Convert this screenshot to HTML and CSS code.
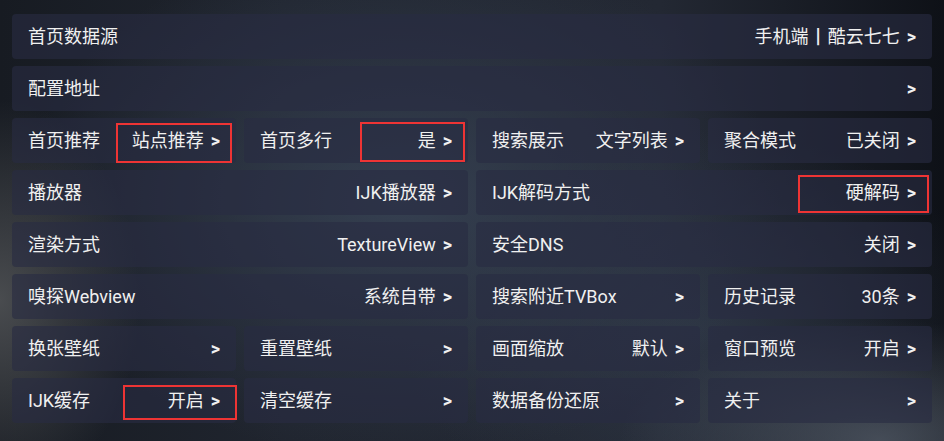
FILE: index.html
```html
<!DOCTYPE html>
<html lang="zh-CN">
<head>
<meta charset="utf-8">
<title>设置</title>
<link rel="stylesheet" href="styles.css">
</head>
<body>
<div class="grid">
  <div class="tile s4"><span class="label">首页数据源</span><span class="value">手机端<b class="bar">|</b>酷云七七<i class="arr">&gt;</i></span></div>
  <div class="tile s4"><span class="label">配置地址</span><span class="value"><i class="arr">&gt;</i></span></div>

  <div class="tile"><span class="label">首页推荐</span><span class="value">站点推荐<i class="arr">&gt;</i></span><span class="mark m1"></span></div>
  <div class="tile"><span class="label">首页多行</span><span class="value">是<i class="arr">&gt;</i></span><span class="mark m2"></span></div>
  <div class="tile"><span class="label">搜索展示</span><span class="value">文字列表<i class="arr">&gt;</i></span></div>
  <div class="tile"><span class="label">聚合模式</span><span class="value">已关闭<i class="arr">&gt;</i></span></div>

  <div class="tile s2"><span class="label">播放器</span><span class="value">IJK播放器<i class="arr">&gt;</i></span></div>
  <div class="tile s2"><span class="label">IJK解码方式</span><span class="value">硬解码<i class="arr">&gt;</i></span><span class="mark m3"></span></div>

  <div class="tile s2"><span class="label">渲染方式</span><span class="value">TextureView<i class="arr">&gt;</i></span></div>
  <div class="tile s2"><span class="label">安全DNS</span><span class="value">关闭<i class="arr">&gt;</i></span></div>

  <div class="tile s2"><span class="label">嗅探Webview</span><span class="value">系统自带<i class="arr">&gt;</i></span></div>
  <div class="tile"><span class="label">搜索附近TVBox</span><span class="value"><i class="arr">&gt;</i></span></div>
  <div class="tile"><span class="label">历史记录</span><span class="value">30条<i class="arr">&gt;</i></span></div>

  <div class="tile"><span class="label">换张壁纸</span><span class="value"><i class="arr">&gt;</i></span></div>
  <div class="tile"><span class="label">重置壁纸</span><span class="value"><i class="arr">&gt;</i></span></div>
  <div class="tile"><span class="label">画面缩放</span><span class="value">默认<i class="arr">&gt;</i></span></div>
  <div class="tile"><span class="label">窗口预览</span><span class="value">开启<i class="arr">&gt;</i></span></div>

  <div class="tile"><span class="label">IJK缓存</span><span class="value">开启<i class="arr">&gt;</i></span><span class="mark m4"></span></div>
  <div class="tile"><span class="label">清空缓存</span><span class="value"><i class="arr">&gt;</i></span></div>
  <div class="tile"><span class="label">数据备份还原</span><span class="value"><i class="arr">&gt;</i></span></div>
  <div class="tile"><span class="label">关于</span><span class="value"><i class="arr">&gt;</i></span></div>
</div>
</body>
</html>
```
FILE: styles.css
```css
html, body {
  margin: 0;
  padding: 0;
  width: 944px;
  height: 441px;
  overflow: hidden;
}
body {
  font-family: Roboto, "Noto Sans CJK SC", sans-serif;
  color: #f0f0f0;
  background-color: #1c212b;
  background-image:
    radial-gradient(ellipse 140px 200px at 0px 300px, rgba(90,92,94,0.75), rgba(90,92,94,0) 100%),
    radial-gradient(ellipse 260px 120px at 880px 440px, rgba(80,88,100,0.8), rgba(80,88,100,0) 100%),
    radial-gradient(ellipse 380px 260px at 400px 200px, rgba(55,66,84,0.9), rgba(55,66,84,0) 100%),
    radial-gradient(ellipse 300px 200px at 700px 330px, rgba(50,60,76,0.7), rgba(50,60,76,0) 100%),
    linear-gradient(90deg, #171b22 0%, #20252f 30%, #232833 70%, #0e1117 100%);
}
.grid {
  display: grid;
  grid-template-columns: repeat(4, 224px);
  grid-auto-rows: 45px;
  column-gap: 8px;
  row-gap: 7px;
  padding: 14px 12px 0 12px;
}
.tile {
  position: relative;
  display: flex;
  align-items: center;
  justify-content: space-between;
  padding: 0 16px;
  border-radius: 4px;
  background: rgba(40, 44, 66, 0.62);
  font-size: 18px;
  white-space: nowrap;
}
.s2 { grid-column: span 2; }
.s4 { grid-column: span 4; }
.label, .value {
  line-height: 45px;
}
.arr {
  font-style: normal;
  font-weight: 700;
  margin-left: 7px;
}
.bar {
  font-weight: 900;
  font-size: 20px;
  margin: 0 7px;
}
.mark {
  position: absolute;
  box-sizing: border-box;
  border: 2px solid #ee3434;
}
.m1 { left: 104px; top: 5px; width: 116px; height: 40px; }
.m2 { left: 116px; top: 4px; width: 105px; height: 40px; }
.m3 { left: 322px; top: 5px; width: 131px; height: 38px; }
.m4 { left: 111px; top: 7px; width: 114px; height: 35px; }
```
